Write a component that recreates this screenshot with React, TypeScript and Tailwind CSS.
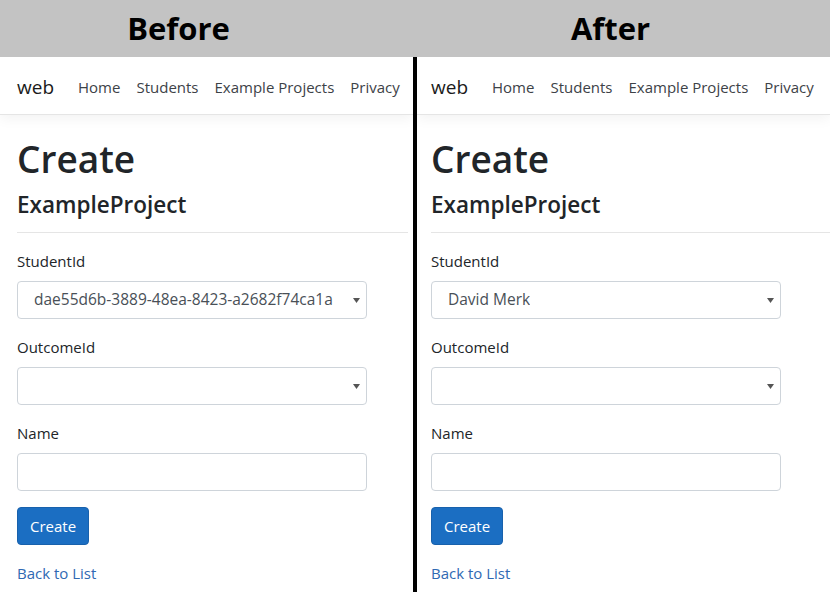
const font = { fontFamily: '"Open Sans", "Noto Sans", sans-serif' };

function Caret() {
  return (
    <svg width="7" height="5" viewBox="0 0 7 5" className="shrink-0">
      <polygon points="0,0 7,0 3.5,5" fill="#555" />
    </svg>
  );
}

function SelectBox({ value }: { value?: string }) {
  return (
    <div className="flex h-[38px] w-[350px] items-center justify-between rounded-[4px] border border-[#ced4da] bg-white pl-[16px] pr-[6px] text-[15.5px] text-[#495057]">
      <span className="truncate">{value ?? ""}</span>
      <Caret />
    </div>
  );
}

function Label({ children }: { children: string }) {
  return <div className="mb-2 h-6 text-[15px] leading-6 text-[#212529]">{children}</div>;
}

function Panel({ student, pad, hrGap }: { student: string; pad: string; hrGap: string }) {
  const links = ["Home", "Students", "Example Projects", "Privacy"];
  return (
    <div className="flex flex-col">
      <nav className={`relative z-10 flex h-[58px] items-center whitespace-nowrap border-b border-[#e5e5e5] bg-white pt-1 shadow-[0_4px_12px_rgba(0,0,0,0.05)] ${pad}`}>
        <span className="mr-4 shrink-0 text-[19px] text-[#1a1a1a]">web</span>
        <div className="flex shrink-0">
          {links.map((l) => (
            <span key={l} className="shrink-0 px-2 text-[15px] text-[#3d4247]">
              {l}
            </span>
          ))}
        </div>
      </nav>
      <main className={`pt-5 ${pad}`}>
        <h1 className="text-[37px] font-semibold leading-[48px] text-[#212529]">Create</h1>
        <h4 className="mt-[7px] text-[22.5px] font-semibold leading-[29px] text-[#212529]">ExampleProject</h4>
        <hr className={`mt-[13px] border-t border-[#e5e5e5] ${hrGap}`} />
        <div className="mt-4 w-[350px]">
          <Label>StudentId</Label>
          <SelectBox value={student} />
          <div className="mt-4">
            <Label>OutcomeId</Label>
            <SelectBox />
          </div>
          <div className="mt-4">
            <Label>Name</Label>
            <div className="h-[38px] w-[350px] rounded-[4px] border border-[#ced4da] bg-white" />
          </div>
          <button className="mt-4 flex h-[38px] items-center rounded-[4px] border border-[#1861ac] bg-[#1b6ec2] px-3 text-[15px] text-white">
            Create
          </button>
          <div className="mt-4 h-6 text-[15px] leading-6 text-[#2f69b3]">Back to List</div>
        </div>
      </main>
    </div>
  );
}

export default function App() {
  return (
    <div className="flex h-[592px] w-[830px] flex-col overflow-hidden bg-white" style={font}>
      <header className="flex h-[57px] shrink-0 items-center bg-[#c3c3c3] text-[31px] font-bold text-black">
        <div className="w-[413px] pr-[56px] text-center">Before</div>
        <div className="w-[417px] pl-[4px] pr-[26px] text-center">After</div>
      </header>
      <div className="flex flex-1 overflow-hidden">
        <div className="w-[413px] shrink-0 overflow-hidden">
          <Panel student="dae55d6b-3889-48ea-8423-a2682f74ca1a" pad="pl-[17px]" hrGap="mr-[5px]" />
        </div>
        <div className="w-[4px] shrink-0 bg-black" />
        <div className="flex-1 overflow-hidden">
          <Panel student="David Merk" pad="pl-[14px]" hrGap="mr-0" />
        </div>
      </div>
    </div>
  );
}
